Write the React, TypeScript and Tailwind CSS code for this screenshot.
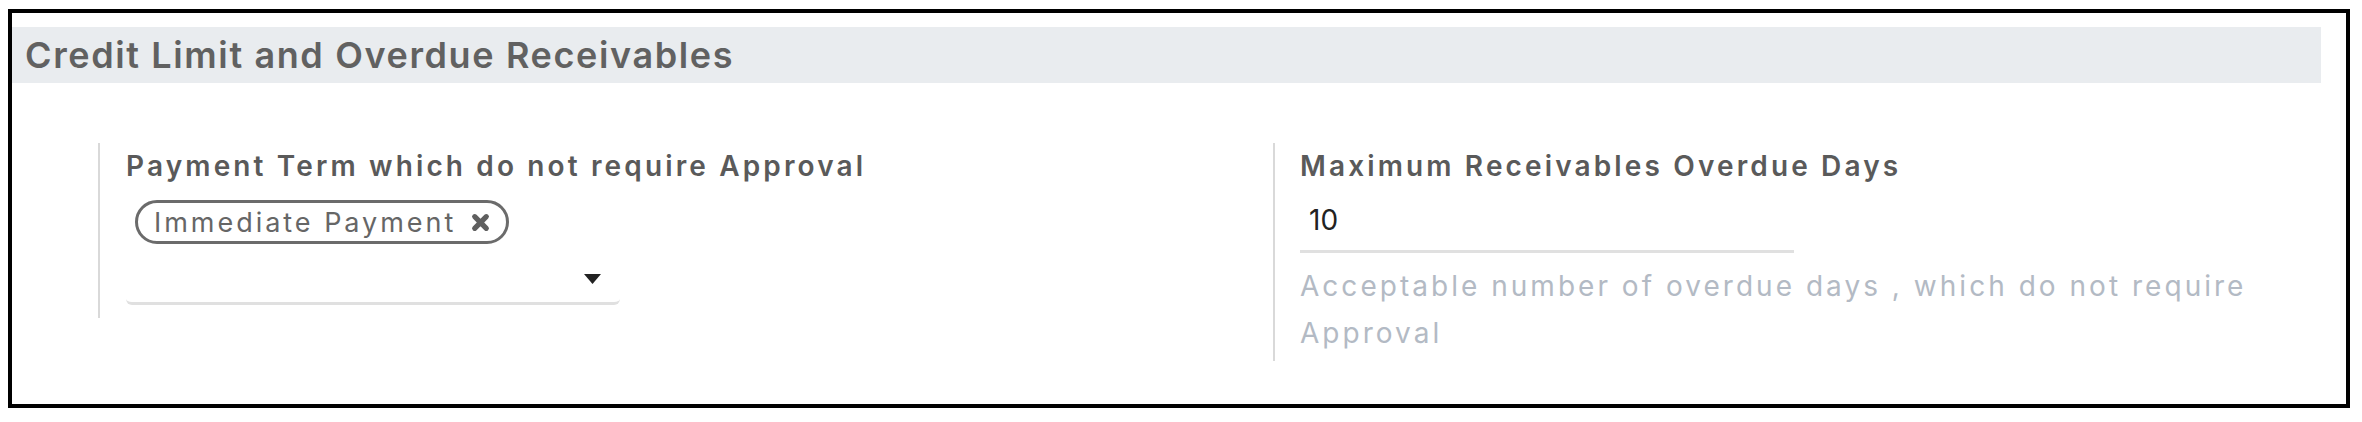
const font = { fontFamily: "Inter, 'Noto Sans', sans-serif" };

function ChipClose() {
  return (
    <svg width="21" height="21" viewBox="0 0 20 20" className="shrink-0">
      <path d="M4.5 4.5 L15.5 15.5 M15.5 4.5 L4.5 15.5" stroke="#5f5f5f" strokeWidth="5" strokeLinecap="round" />
    </svg>
  );
}

function PaymentTermField() {
  return (
    <div className="w-[1175px] border-l-2 border-[#d9d9d9] pl-[26px] pt-[5px] pb-[13px]">
      <div className="text-[28px] leading-[36px] font-semibold text-[#5a5a5a] tracking-[0.112em] whitespace-nowrap">
        Payment Term which do not require Approval
      </div>
      <div className="mt-[16px] ml-[9px] flex">
        <div className="flex items-center gap-[14px] h-[44px] pl-[16px] pr-[15px] border-[3px] border-[#6b6b6b] rounded-full">
          <span className="text-[27px] leading-none text-[#666666] tracking-[0.11em] whitespace-nowrap">Immediate Payment</span>
          <ChipClose />
        </div>
      </div>
      <div className="w-[494px] h-[61px] pt-[12px] flex items-center justify-end pr-[19px] border-b-[3px] border-[#e0e0e0] rounded-b-[6px]">
        <svg width="17" height="10" viewBox="0 0 17 10">
          <path d="M0 0 H17 L8.5 10 Z" fill="#222222" />
        </svg>
      </div>
    </div>
  );
}

function OverdueDaysField() {
  return (
    <div className="flex-1 border-l-2 border-[#d9d9d9] pl-[25px] pt-[5px] pb-[4px]">
      <div className="text-[28px] leading-[36px] font-semibold text-[#5a5a5a] tracking-[0.112em] whitespace-nowrap">
        Maximum Receivables Overdue Days
      </div>
      <div className="w-[494px] border-b-[3px] border-[#e0e0e0] pt-[19px] pb-[13px] pl-[9px] text-[28px] leading-[34px] text-[#222222]">
        10
      </div>
      <div className="mt-[10px] max-w-[1000px] text-[28px] leading-[47px] text-[#b3bac4] tracking-[0.108em]">
        Acceptable number of overdue days , which do not require Approval
      </div>
    </div>
  );
}

export default function App() {
  return (
    <div className="bg-white w-[2362px] h-[422px] pl-[8px] pt-[9px]" style={font}>
      <div className="w-[2342px] h-[399px] border-4 border-black bg-white">
        <div className="mt-[14px] mr-[25px] h-[56px] pb-[1px] bg-[#e9ecef] flex items-center pl-[13px]">
          <h2 className="text-[36px] font-semibold text-[#616161] leading-none tracking-[0.045em] whitespace-nowrap">
            Credit Limit and Overdue Receivables
          </h2>
        </div>
        <div className="mt-[60px] pl-[86px] flex items-start">
          <PaymentTermField />
          <OverdueDaysField />
        </div>
      </div>
    </div>
  );
}
